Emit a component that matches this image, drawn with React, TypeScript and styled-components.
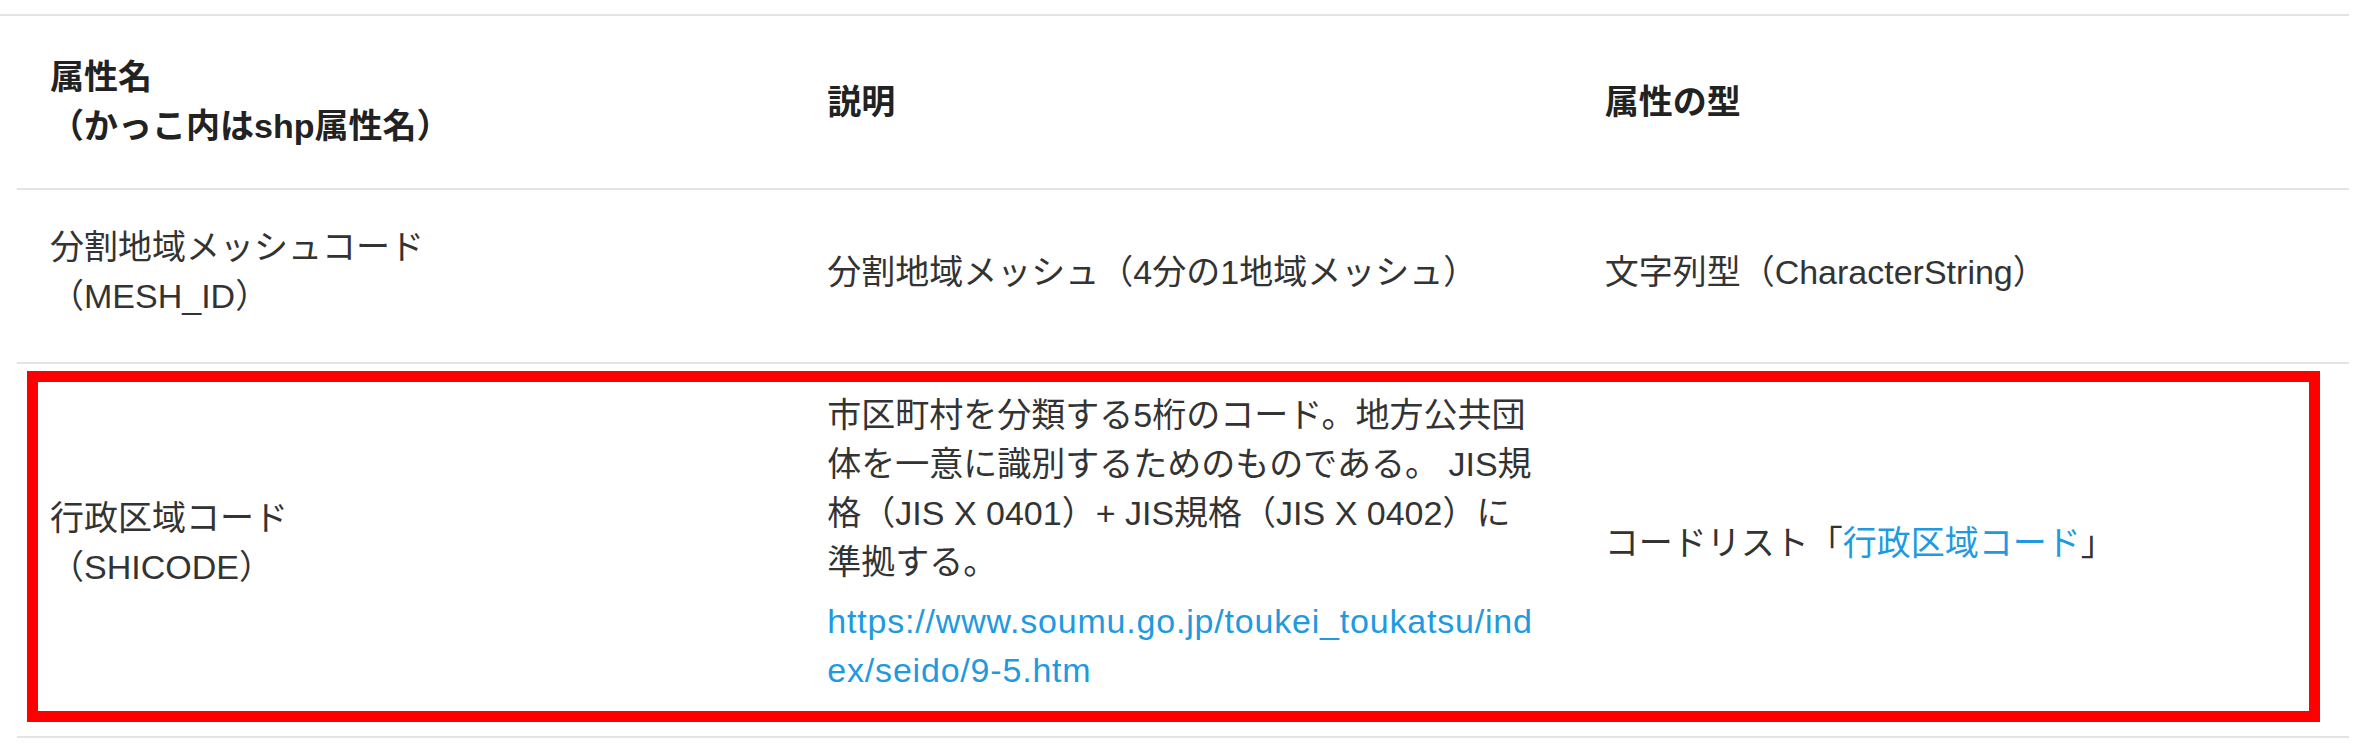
import React from "react";
import styled, { createGlobalStyle } from "styled-components";

const GlobalStyle = createGlobalStyle`
  html, body {
    margin: 0;
    padding: 0;
    background: #ffffff;
  }
  body {
    font-family: "Liberation Sans", "Noto Sans CJK JP", sans-serif;
    color: #333333;
  }
`;

const Page = styled.div`
  width: 2369px;
  padding-top: 14px;
`;

const TopRule = styled.div`
  width: 2349px;
  height: 2px;
  background: #e4e4e4;
`;

const Table = styled.div`
  width: 2332px;
  margin-left: 17px;
`;

const Cell = styled.div<{ $head?: boolean }>`
  display: flex;
  flex-direction: column;
  justify-content: center;
  padding-left: 33px;
  padding-right: 24px;
  font-size: 34px;
  line-height: 49px;
  font-weight: ${(p) => (p.$head ? 700 : 400)};
  color: ${(p) => (p.$head ? "#222222" : "#333333")};
`;

const Row = styled.div<{ $top: number; $bottom: number }>`
  position: relative;
  display: grid;
  grid-template-columns: 1fr 1fr 1fr;
  border-bottom: 2px solid #e4e4e4;

  & > ${Cell} {
    padding-top: ${(p) => p.$top}px;
    padding-bottom: ${(p) => p.$bottom}px;
  }
`;

const Line = styled.span`
  display: block;
  white-space: nowrap;
`;

const Paragraph = styled.p`
  margin: 0;
`;

const UrlBlock = styled.p`
  margin: 10px 0 0;
`;

const Link = styled.a`
  color: #1f9ae0;
  text-decoration: none;
`;

const UrlLink = styled(Link)`
  letter-spacing: 0.8px;
`;

const Highlight = styled.div`
  position: absolute;
  left: 10px;
  right: 29px;
  top: 7px;
  bottom: 14px;
  border: 11px solid #ff0000;
  pointer-events: none;
`;

export default function App() {
  return (
    <Page>
      <GlobalStyle />
      <TopRule />
      <Table>
        <Row $top={37} $bottom={37}>
          <Cell $head>
            <Line>属性名</Line>
            <Line>（かっこ内はshp属性名）</Line>
          </Cell>
          <Cell $head>説明</Cell>
          <Cell $head>属性の型</Cell>
        </Row>
        <Row $top={33} $bottom={41}>
          <Cell>
            <Line>分割地域メッシュコード</Line>
            <Line>（MESH_ID）</Line>
          </Cell>
          <Cell>分割地域メッシュ（4分の1地域メッシュ）</Cell>
          <Cell>文字列型（CharacterString）</Cell>
        </Row>
        <Row $top={27} $bottom={41}>
          <Cell>
            <Line>行政区域コード</Line>
            <Line>（SHICODE）</Line>
          </Cell>
          <Cell>
            <Paragraph>
              <Line>市区町村を分類する5桁のコード。地方公共団</Line>
              <Line>体を一意に識別するためのものである。 JIS規</Line>
              <Line>格（JIS X 0401）+ JIS規格（JIS X 0402）に</Line>
              <Line>準拠する。</Line>
            </Paragraph>
            <UrlBlock>
              <UrlLink href="https://www.soumu.go.jp/toukei_toukatsu/index/seido/9-5.htm">
                <Line>https://www.soumu.go.jp/toukei_toukatsu/ind</Line>
                <Line>ex/seido/9-5.htm</Line>
              </UrlLink>
            </UrlBlock>
          </Cell>
          <Cell>
            <Line>
              コードリスト「<Link href="#">行政区域コード</Link>」
            </Line>
          </Cell>
          <Highlight />
        </Row>
      </Table>
    </Page>
  );
}
